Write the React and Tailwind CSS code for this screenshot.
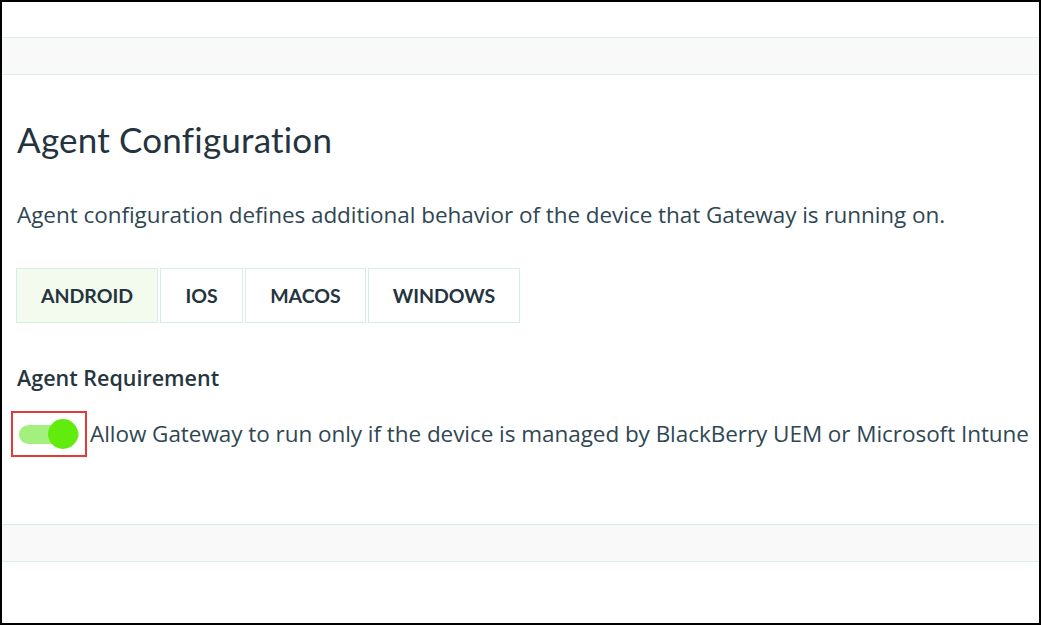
const tabs = [
  { label: "ANDROID", w: "w-[142px]", active: true },
  { label: "IOS", w: "w-[83px]" },
  { label: "MACOS", w: "w-[121px]" },
  { label: "WINDOWS", w: "w-[152px]" },
];

const Band = () => (
  <div className="h-[38px] border-y border-[#dcecec] bg-[#f9f9f9]" />
);

const AgentConfiguration = () => {
  return (
    <div className="px-[14px]">
      <h1 className="pt-[42px] ml-[1px] text-[35px] leading-[44px] text-[#24343f] font-['Lato',sans-serif] tracking-[0.2px]">
        Agent Configuration
      </h1>
      <p className="mt-[40px] ml-[1px] text-[22.5px] leading-[28px] text-[#2f4753] font-['Open_Sans',sans-serif] tracking-[-0.05px]">
        Agent configuration defines additional behavior of the device that Gateway is running on.
      </p>
      <div className="mt-[39px] flex gap-[2px]">
        {tabs.map((t) => (
          <button
            key={t.label}
            className={`h-[55px] ${t.w} border border-[#d8ecea] font-['Lato',sans-serif] font-bold text-[19.5px] text-[#25343e] ${
              t.active ? "bg-[#f3fbee]" : "bg-white"
            }`}
          >
            {t.label}
          </button>
        ))}
      </div>
      <h2 className="mt-[41px] ml-[1px] text-[21.5px] leading-[28px] font-semibold text-[#26363f] font-['Open_Sans',sans-serif]">
        Agent Requirement
      </h2>
      <div className="mt-[19px] flex items-center">
        <div className="-ml-[5px] shrink-0 w-[76px] h-[46px] border-2 border-[#e53935] flex items-center pl-[6px]">
          <div className="relative w-[60px] h-[19px] rounded-full bg-[#a3f07f]">
            <div className="absolute right-[1px] top-1/2 -translate-y-1/2 w-[30px] h-[30px] rounded-full bg-[#62ec0e]" />
          </div>
        </div>
        <span className="ml-[3px] whitespace-nowrap text-[22.5px] leading-[28px] text-[#2f4753] font-['Open_Sans',sans-serif] tracking-[-0.05px]">
          Allow Gateway to run only if the device is managed by BlackBerry UEM or Microsoft Intune
        </span>
      </div>
    </div>
  );
};

export default function App() {
  return (
    <div className="w-[1042px] h-[625px] bg-white">
      <div className="w-[1041px] h-[625px] border-x-2 border-y-2 border-black flex flex-col overflow-hidden">
        <div className="h-[35px]" />
        <Band />
        <div className="h-[449px]">
          <AgentConfiguration />
        </div>
        <Band />
      </div>
    </div>
  );
}
